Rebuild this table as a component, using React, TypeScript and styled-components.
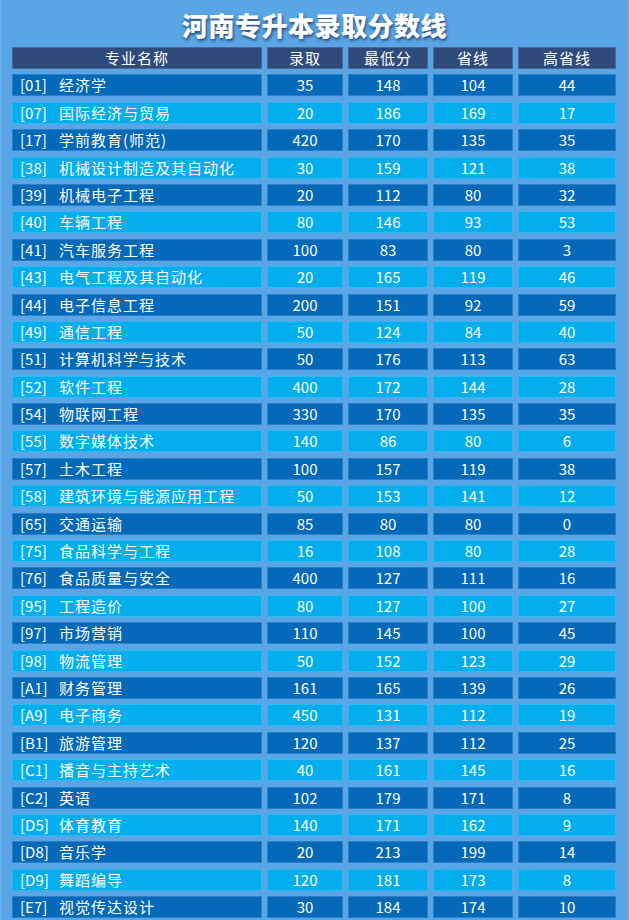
import React from "react";
import styled, { createGlobalStyle } from "styled-components";

const GlobalStyle = createGlobalStyle`
  html, body {
    margin: 0;
    padding: 0;
    background: #5aa5e5;
  }
  body {
    font-family: "Noto Sans CJK SC", "Noto Sans", sans-serif;
  }
`;

type Row = [string, string, number, number, number, number];

const rows: Row[] = [
  ["01", "经济学", 35, 148, 104, 44],
  ["07", "国际经济与贸易", 20, 186, 169, 17],
  ["17", "学前教育(师范)", 420, 170, 135, 35],
  ["38", "机械设计制造及其自动化", 30, 159, 121, 38],
  ["39", "机械电子工程", 20, 112, 80, 32],
  ["40", "车辆工程", 80, 146, 93, 53],
  ["41", "汽车服务工程", 100, 83, 80, 3],
  ["43", "电气工程及其自动化", 20, 165, 119, 46],
  ["44", "电子信息工程", 200, 151, 92, 59],
  ["49", "通信工程", 50, 124, 84, 40],
  ["51", "计算机科学与技术", 50, 176, 113, 63],
  ["52", "软件工程", 400, 172, 144, 28],
  ["54", "物联网工程", 330, 170, 135, 35],
  ["55", "数字媒体技术", 140, 86, 80, 6],
  ["57", "土木工程", 100, 157, 119, 38],
  ["58", "建筑环境与能源应用工程", 50, 153, 141, 12],
  ["65", "交通运输", 85, 80, 80, 0],
  ["75", "食品科学与工程", 16, 108, 80, 28],
  ["76", "食品质量与安全", 400, 127, 111, 16],
  ["95", "工程造价", 80, 127, 100, 27],
  ["97", "市场营销", 110, 145, 100, 45],
  ["98", "物流管理", 50, 152, 123, 29],
  ["A1", "财务管理", 161, 165, 139, 26],
  ["A9", "电子商务", 450, 131, 112, 19],
  ["B1", "旅游管理", 120, 137, 112, 25],
  ["C1", "播音与主持艺术", 40, 161, 145, 16],
  ["C2", "英语", 102, 179, 171, 8],
  ["D5", "体育教育", 140, 171, 162, 9],
  ["D8", "音乐学", 20, 213, 199, 14],
  ["D9", "舞蹈编导", 120, 181, 173, 8],
  ["E7", "视觉传达设计", 30, 184, 174, 10],
];

const Page = styled.div`
  width: 629px;
  height: 920px;
  box-sizing: border-box;
  background: #5aa5e5;
  border-left: 1px solid #6cb2ec;
  border-right: 1px solid #6cb2ec;
  overflow: hidden;
  display: flex;
  flex-direction: column;
`;

const Title = styled.h1`
  margin: 0;
  height: 47px;
  display: flex;
  align-items: center;
  justify-content: center;
  padding-top: 1px;
  box-sizing: border-box;
  color: #ffffff;
  font-size: 26px;
  font-weight: 900;
  letter-spacing: 0.5px;
  text-shadow: 1px 2px 3px rgba(20, 40, 90, 0.75);
`;

const Table = styled.div`
  display: flex;
  flex-direction: column;
  gap: 5.4px;
  padding-left: 11px;
`;

const Line = styled.div`
  display: grid;
  grid-template-columns: 250px 76px 80px 80px 98px;
  column-gap: 5px;
  height: 22px;
`;

type Tone = "head" | "dark" | "light";

const tones: Record<Tone, { bg: string; border: string }> = {
  head: { bg: "#2f4b7c", border: "#49679c" },
  dark: { bg: "#0369b8", border: "#2a80c6" },
  light: { bg: "#02aeee", border: "#2cbbf0" },
};

const Cell = styled.div<{ $tone: Tone; $left?: boolean }>`
  box-sizing: border-box;
  background: ${(p) => tones[p.$tone].bg};
  border: 1px solid ${(p) => tones[p.$tone].border};
  color: #ffffff;
  font-size: 15px;
  line-height: 20px;
  display: flex;
  align-items: center;
  justify-content: ${(p) => (p.$left ? "flex-start" : "center")};
  padding-left: ${(p) => (p.$left ? "7px" : "0")};
  white-space: nowrap;
`;

const HeadText = styled.span`
  letter-spacing: 1px;
`;

const Code = styled.span`
  width: 39px;
  flex: none;
`;

const Name = styled.span`
  letter-spacing: 1px;
`;

export default function App() {
  return (
    <>
      <GlobalStyle />
      <Page>
        <Title>河南专升本录取分数线</Title>
        <Table>
          <Line>
            <Cell $tone="head"><HeadText>专业名称</HeadText></Cell>
            <Cell $tone="head"><HeadText>录取</HeadText></Cell>
            <Cell $tone="head"><HeadText>最低分</HeadText></Cell>
            <Cell $tone="head"><HeadText>省线</HeadText></Cell>
            <Cell $tone="head"><HeadText>高省线</HeadText></Cell>
          </Line>
          {rows.map((r, i) => {
            const tone: Tone = i % 2 === 0 ? "dark" : "light";
            return (
              <Line key={r[0]}>
                <Cell $tone={tone} $left>
                  <Code>[{r[0]}]</Code>
                  <Name>{r[1]}</Name>
                </Cell>
                <Cell $tone={tone}>{r[2]}</Cell>
                <Cell $tone={tone}>{r[3]}</Cell>
                <Cell $tone={tone}>{r[4]}</Cell>
                <Cell $tone={tone}>{r[5]}</Cell>
              </Line>
            );
          })}
        </Table>
      </Page>
    </>
  );
}
